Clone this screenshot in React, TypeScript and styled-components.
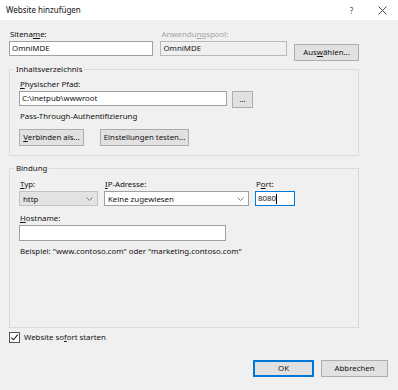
import React from "react";
import styled, { createGlobalStyle } from "styled-components";

const Global = createGlobalStyle`
  html, body { margin: 0; padding: 0; background: #f0f0f0; }
  #root { width: 398px; height: 390px; }
`;

const Window = styled.div`
  width: 398px;
  height: 390px;
  background: #f0f0f0;
  display: flex;
  flex-direction: column;
  font-family: "Noto Sans", sans-serif;
  font-size: 7.85px;
  color: #111;
  overflow: hidden;
  * { box-sizing: border-box; }
`;

const TitleBar = styled.div`
  height: 20px;
  flex: none;
  background: #fff;
  display: flex;
  align-items: center;
  padding: 0 0 0 6px;
`;

const Title = styled.div`
  flex: 1;
  line-height: 20px;
  font-size: 8px;
`;

const TitleIcon = styled.div`
  width: 31px;
  height: 20px;
  display: flex;
  align-items: center;
  justify-content: center;
  color: #444;
  font-size: 8px;
`;

const Body = styled.div`
  flex: 1;
  display: flex;
  flex-direction: column;
  padding: 9px 10px 13px 9px;
`;

const Main = styled.div`
  width: 350px;
  display: flex;
  flex-direction: column;
`;

const Row = styled.div<{ $gap?: number; $top?: number }>`
  display: flex;
  align-items: flex-start;
  gap: ${(p) => p.$gap ?? 6}px;
  margin-top: ${(p) => p.$top ?? 0}px;
`;

const Field = styled.div<{ $w: number }>`
  width: ${(p) => p.$w}px;
  display: flex;
  flex-direction: column;
`;

const Label = styled.div<{ $disabled?: boolean }>`
  height: 11px;
  line-height: 11px;
  margin-bottom: 1px;
  padding-left: 1px;
  white-space: nowrap;
  color: ${(p) => (p.$disabled ? "#a3a3a3" : "#111")};
`;

const Text = styled.div<{ $top?: number }>`
  height: 11px;
  line-height: 11px;
  margin-top: ${(p) => p.$top ?? 0}px;
  padding-left: 1px;
  white-space: nowrap;
`;

const TextBox = styled.div<{ $w?: number; $variant?: "normal" | "readonly" | "focus"; $h?: number }>`
  width: ${(p) => (p.$w ? `${p.$w}px` : "100%")};
  height: ${(p) => p.$h ?? 15}px;
  line-height: 13px;
  padding: 0 2px;
  white-space: nowrap;
  background: ${(p) => (p.$variant === "readonly" ? "#f0f0f0" : "#fff")};
  border: 1px solid
    ${(p) =>
      p.$variant === "readonly" ? "#b9b9b9" : p.$variant === "focus" ? "#0078d7" : "#a0a0a0"};
  display: flex;
  align-items: center;
`;

const Caret = styled.span`
  display: inline-block;
  width: 1px;
  height: 10px;
  background: #000;
`;

const Combo = styled.div<{ $w: number; $disabled?: boolean }>`
  width: ${(p) => p.$w}px;
  height: 15px;
  padding: 0 4px 0 3px;
  display: flex;
  align-items: center;
  justify-content: space-between;
  background: ${(p) => (p.$disabled ? "#e3e3e3" : "#fff")};
  border: 1px solid ${(p) => (p.$disabled ? "#c2c2c2" : "#a0a0a0")};
  white-space: nowrap;
`;

const Button = styled.button<{ $w: number; $top?: number; $default?: boolean }>`
  width: ${(p) => p.$w}px;
  height: 17px;
  margin-top: ${(p) => p.$top ?? 0}px;
  padding: 0;
  font: inherit;
  color: #111;
  background: #e1e1e1;
  border: 1px solid ${(p) => (p.$default ? "#0078d7" : "#adadad")};
  box-shadow: ${(p) => (p.$default ? "inset 0 0 0 1px #0078d7" : "none")};
  flex: none;
  line-height: 15px;
  white-space: nowrap;
`;

const Group = styled.fieldset<{ $top: number; $h?: number }>`
  margin: ${(p) => p.$top}px 0 0 0;
  width: 350px;
  height: ${(p) => (p.$h ? `${p.$h}px` : "auto")};
  border: 1px solid #dcdcdc;
  padding: 5px 9px 9px 9px;
  min-width: 0;
`;

const Legend = styled.legend`
  padding: 0 2px;
  margin-left: -5px;
  line-height: 10px;
  height: 10px;
`;

const CheckRow = styled.label`
  display: flex;
  align-items: center;
  gap: 4px;
  margin-top: 4px;
  height: 11px;
  line-height: 11px;
`;

const Footer = styled.div`
  margin-top: auto;
  display: flex;
  justify-content: flex-end;
  gap: 7px;
`;

const U = styled.span`
  text-decoration: underline;
  text-underline-offset: 1px;
`;

const Chevron = () => (
  <svg width="7" height="4" viewBox="0 0 7 4">
    <path d="M0.5 0.5 L3.5 3.5 L6.5 0.5" fill="none" stroke="#7a7a7a" strokeWidth="1" />
  </svg>
);

const CloseIcon = () => (
  <svg width="9" height="9" viewBox="0 0 9 9">
    <path d="M0.5 0.5 L8.5 8.5 M8.5 0.5 L0.5 8.5" stroke="#333" strokeWidth="0.9" />
  </svg>
);

const CheckBox = () => (
  <svg width="11" height="11" viewBox="0 0 11 11">
    <rect x="0.5" y="0.5" width="10" height="10" fill="#fff" stroke="#555" />
    <path d="M2.2 5.6 L4.4 7.8 L8.8 2.6" fill="none" stroke="#222" strokeWidth="1.1" />
  </svg>
);

export default function App() {
  return (
    <>
      <Global />
      <Window>
        <TitleBar>
          <Title>Website hinzufügen</Title>
          <TitleIcon>?</TitleIcon>
          <TitleIcon>
            <CloseIcon />
          </TitleIcon>
        </TitleBar>
        <Body>
          <Main>
            <Row $gap={7}>
              <Field $w={145}>
                <Label>
                  Sitena<U>m</U>e:
                </Label>
                <TextBox>OmniMDE</TextBox>
              </Field>
              <Field $w={127}>
                <Label $disabled>
                  Anwendu<U>n</U>gspool:
                </Label>
                <TextBox $variant="readonly">OmniMDE</TextBox>
              </Field>
              <Button $w={65} $top={15}>
                Aus<U>w</U>ählen...
              </Button>
            </Row>

            <Group $top={3}>
              <Legend>Inhaltsverzeichnis</Legend>
              <Label>
                <U>P</U>hysischer Pfad:
              </Label>
              <Row $gap={5}>
                <TextBox $w={208}>C:\inetpub\wwwroot</TextBox>
                <Button $w={21}>...</Button>
              </Row>
              <Text $top={3}>Pass-Through-Authentifizierung</Text>
              <Row $gap={16} $top={7}>
                <Button $w={65}>
                  <U>V</U>erbinden als...
                </Button>
                <Button $w={89}>Einstellungen testen...</Button>
              </Row>
            </Group>

            <Group $top={7} $h={165}>
              <Legend>Bindung</Legend>
              <Row $gap={6} $top={1}>
                <Field $w={79}>
                  <Label>
                    <U>T</U>yp:
                  </Label>
                  <Combo $w={79} $disabled>
                    <span>http</span>
                    <Chevron />
                  </Combo>
                </Field>
                <Field $w={145}>
                  <Label>
                    <U>I</U>P-Adresse:
                  </Label>
                  <Combo $w={145}>
                    <span>Keine zugewiesen</span>
                    <Chevron />
                  </Combo>
                </Field>
                <Field $w={40}>
                  <Label>
                    P<U>o</U>rt:
                  </Label>
                  <TextBox $variant="focus">
                    8080
                    <Caret />
                  </TextBox>
                </Field>
              </Row>
              <Row $top={7}>
                <Field $w={207}>
                  <Label>
                    <U>H</U>ostname:
                  </Label>
                  <TextBox $h={16} />
                </Field>
              </Row>
              <Text $top={5}>Beispiel: "www.contoso.com" oder "marketing.contoso.com"</Text>
            </Group>

            <CheckRow>
              <CheckBox />
              <span>
                Website so<U>f</U>ort starten
              </span>
            </CheckRow>
          </Main>
          <Footer>
            <Button $w={61} $default>
              OK
            </Button>
            <Button $w={67}>Abbrechen</Button>
          </Footer>
        </Body>
      </Window>
    </>
  );
}
